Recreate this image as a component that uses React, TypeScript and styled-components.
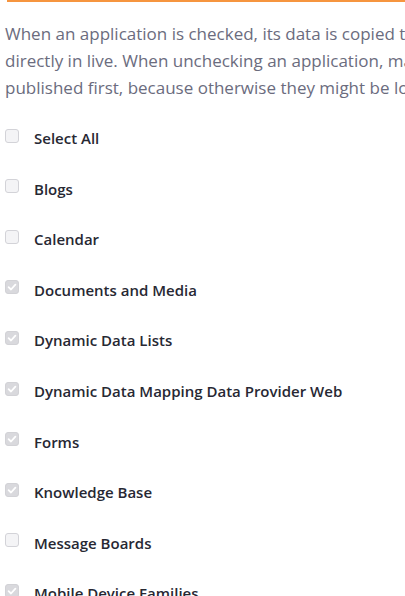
import styled, { createGlobalStyle } from "styled-components";

const GlobalStyle = createGlobalStyle`
    html, body {
        margin: 0;
        padding: 0;
        background: #fff;
        overflow: hidden;
    }
    body {
        font-family: "Open Sans", "Liberation Sans", sans-serif;
    }
`

const Panel = styled.div`
    width: 405px;
    height: 596px;
    overflow: hidden;
`

const ActiveBar = styled.div`
    height: 2px;
    margin-left: 7px;
    background-color: #f6953f;
`

const Description = styled.p`
    margin: 17.5px 0 0 0;
    padding-left: 5px;
    font-size: 17px;
    line-height: 27px;
    color: #6b6c7e;
    white-space: nowrap;
`

const AppList = styled.ul`
    list-style: none;
    margin: 13px 0 0 0;
    padding: 0 0 0 5px;
`

const AppRow = styled.li`
    display: flex;
    align-items: center;
    gap: 15px;
    height: 50.55px;
    margin: 0;
`

const Box = styled.span<{ $checked: boolean }>`
    flex: none;
    width: 14px;
    height: 14px;
    box-sizing: border-box;
    border-radius: 3px;
    border: 1px solid ${p => p.$checked ? '#d2d2d6' : '#d3d3d8'};
    background-color: ${p => p.$checked ? '#d9d9dd' : '#f4f4f6'};
    display: flex;
    align-items: center;
    justify-content: center;
    margin-top: -6px;
`

const Label = styled.span`
    font-size: 15px;
    font-weight: 600;
    color: #272833;
    white-space: nowrap;
    line-height: 21px;
`

const apps = [
    { name: 'Select All', checked: false },
    { name: 'Blogs', checked: false },
    { name: 'Calendar', checked: false },
    { name: 'Documents and Media', checked: true },
    { name: 'Dynamic Data Lists', checked: true },
    { name: 'Dynamic Data Mapping Data Provider Web', checked: true },
    { name: 'Forms', checked: true },
    { name: 'Knowledge Base', checked: true },
    { name: 'Message Boards', checked: false },
    { name: 'Mobile Device Families', checked: true },
];

const Check = () => (
    <svg width="10" height="10" viewBox="0 0 10 10">
        <path d="M1.6 5.2 L4 7.5 L8.4 2.6" fill="none" stroke="#fff" strokeWidth="1.8" strokeLinecap="round" strokeLinejoin="round" />
    </svg>
);

const App = () => {
    return <>
        <GlobalStyle />
        <Panel>
            <ActiveBar />
            <Description>
                When an application is checked, its data is copied to staging and it is not possible to edit it<br />
                directly in live. When unchecking an application, make sure that any changes done in staging are<br />
                published first, because otherwise they might be lost.
            </Description>
            <AppList>
                {apps.map(app =>
                    <AppRow key={app.name}>
                        <Box $checked={app.checked}>{app.checked && <Check />}</Box>
                        <Label>{app.name}</Label>
                    </AppRow>
                )}
            </AppList>
        </Panel>
    </>
}

export default App;
